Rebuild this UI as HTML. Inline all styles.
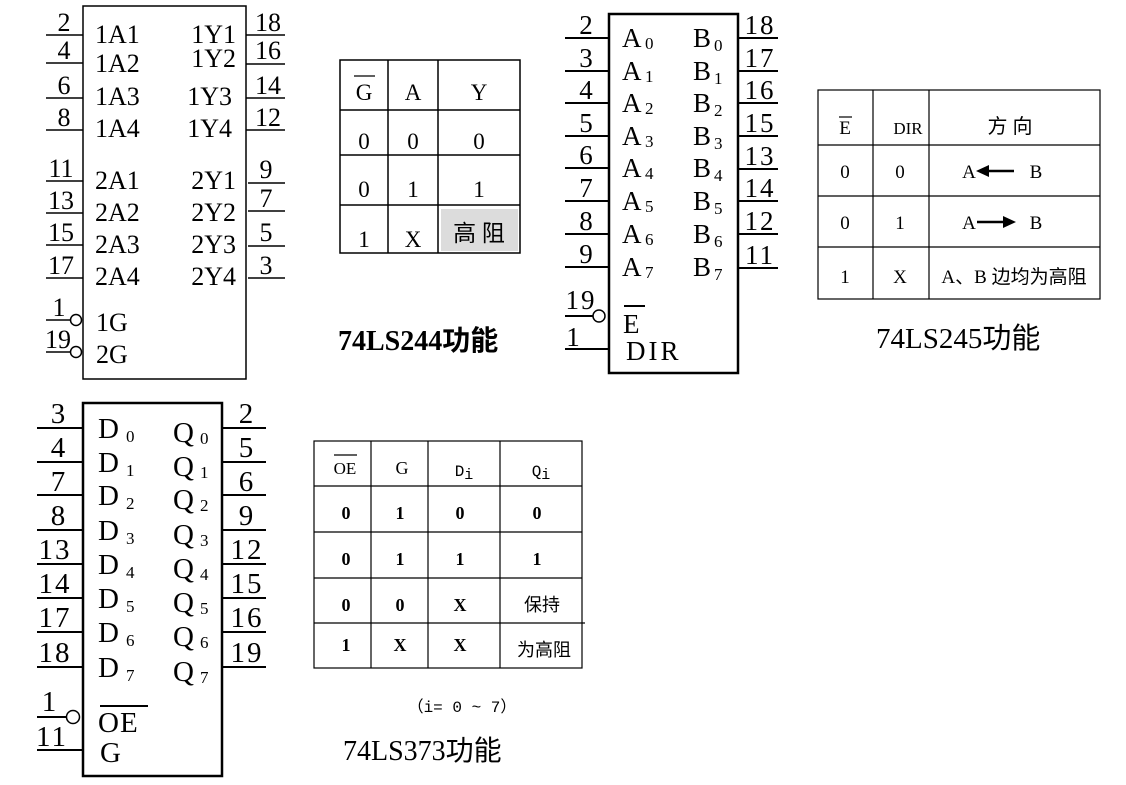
<!DOCTYPE html>
<html><head><meta charset="utf-8"><style>
html,body{margin:0;padding:0;background:#fff;}
svg{display:block;}
text{font-family:"Liberation Serif","Noto Serif CJK SC",serif;fill:#000;}
.c{font-family:"Liberation Serif","Noto Sans CJK SC",serif;}
.m{font-family:"Liberation Mono","Noto Sans CJK SC",monospace;}
</style></head><body>
<svg width="1126" height="785" viewBox="0 0 1126 785" xmlns="http://www.w3.org/2000/svg">
<g stroke="#000" stroke-width="1.5" fill="none">
<rect x="83" y="6" width="163" height="373"/>
<path d="M46 35H83M46 63H83M46 98H83M46 130H83M46 181H83M46 213H83M46 245H83M46 278H83M46 320H71M46 352H71"/>
<path d="M246 35H285M246 64H285M246 98H285M246 130H285M248 183H285M248 211H285M248 246H285M248 278H285"/>
<circle cx="76" cy="320" r="5.5"/><circle cx="76" cy="352" r="5.5"/>
<rect x="340" y="60" width="180" height="193"/>
<path d="M388 60V253M438 60V253M340 110H520M340 155H520M340 205H520"/>
</g>
<rect x="441" y="209" width="77" height="42" fill="#dcdcdc"/>
<g font-size="26">
<text x="95" y="43">1A1</text><text x="95" y="72">1A2</text><text x="95" y="105">1A3</text><text x="95" y="137">1A4</text>
<text x="95" y="189">2A1</text><text x="95" y="221">2A2</text><text x="95" y="253">2A3</text><text x="95" y="285">2A4</text>
<text x="96" y="331">1G</text><text x="96" y="363">2G</text>
<text x="236" y="43" text-anchor="end">1Y1</text><text x="236" y="67" text-anchor="end">1Y2</text><text x="232" y="105" text-anchor="end">1Y3</text><text x="232" y="137" text-anchor="end">1Y4</text>
<text x="236" y="189" text-anchor="end">2Y1</text><text x="236" y="221" text-anchor="end">2Y2</text><text x="236" y="253" text-anchor="end">2Y3</text><text x="236" y="285" text-anchor="end">2Y4</text>
<g text-anchor="middle">
<text x="64" y="31">2</text><text x="64" y="59">4</text><text x="64" y="94">6</text><text x="64" y="126">8</text>
<text x="61" y="177">11</text><text x="61" y="209">13</text><text x="61" y="241">15</text><text x="61" y="274">17</text>
<text x="59" y="316">1</text><text x="58" y="348">19</text>
<text x="268" y="31">18</text><text x="268" y="59">16</text><text x="268" y="94">14</text><text x="268" y="126">12</text>
<text x="266" y="178">9</text><text x="266" y="207">7</text><text x="266" y="241">5</text><text x="266" y="274">3</text>
</g>
</g>
<g font-size="23" text-anchor="middle">
<text x="364" y="100">G</text><line x1="354" y1="76" x2="375" y2="76" stroke="#000" stroke-width="1.2"/>
<text x="413" y="100">A</text><text x="479" y="100">Y</text>
<text x="364" y="149">0</text><text x="413" y="149">0</text><text x="479" y="149">0</text>
<text x="364" y="197">0</text><text x="413" y="197">1</text><text x="479" y="197">1</text>
<text x="364" y="247">1</text><text x="413" y="247">X</text>
<text class="c" x="479" y="241">高 阻</text>
</g>
<text x="338" y="350" font-size="28" font-weight="bold" class="c">74LS244功能</text>

<g stroke="#000" stroke-width="1.5" fill="none">
<rect x="609" y="14" width="129" height="359" stroke-width="2.5"/>
<path d="M565 38H609M565 71H609M565 103H609M565 136H609M565 168H609M565 201H609M565 234H609M565 267H609M565 316H593M565 349H609" stroke-width="2"/>
<path d="M738 38H778M738 71H778M738 103H778M738 136H778M738 169H778M738 201H778M738 234H778M738 268H778" stroke-width="2"/>
<circle cx="599" cy="316" r="6"/>
<line x1="624" y1="306" x2="645" y2="306" stroke-width="2"/>
</g>
<g font-size="27">
<text x="622" y="47">A</text><text x="622" y="80">A</text><text x="622" y="112">A</text><text x="622" y="145">A</text><text x="622" y="177">A</text><text x="622" y="210">A</text><text x="622" y="243">A</text><text x="622" y="276">A</text>
<text x="693" y="47">B</text><text x="693" y="80">B</text><text x="693" y="112">B</text><text x="693" y="145">B</text><text x="693" y="177">B</text><text x="693" y="210">B</text><text x="693" y="243">B</text><text x="693" y="276">B</text>
<text x="623" y="333">E</text><text x="626" y="360" letter-spacing="3">DIR</text>
<g text-anchor="middle" letter-spacing="2">
<text x="587" y="34">2</text><text x="587" y="67">3</text><text x="587" y="99">4</text><text x="587" y="132">5</text><text x="587" y="164">6</text><text x="587" y="197">7</text><text x="587" y="230">8</text><text x="587" y="263">9</text>
<text x="581" y="309">19</text><text x="574" y="346">1</text>
<text x="760" y="34">18</text><text x="760" y="67">17</text><text x="760" y="99">16</text><text x="760" y="132">15</text><text x="760" y="165">13</text><text x="760" y="197">14</text><text x="760" y="230">12</text><text x="760" y="264">11</text>
</g>
</g>
<g font-size="17">
<text x="645" y="49">0</text><text x="645" y="82">1</text><text x="645" y="114">2</text><text x="645" y="147">3</text><text x="645" y="179">4</text><text x="645" y="212">5</text><text x="645" y="245">6</text><text x="645" y="278">7</text>
<text x="714" y="51">0</text><text x="714" y="84">1</text><text x="714" y="116">2</text><text x="714" y="149">3</text><text x="714" y="181">4</text><text x="714" y="214">5</text><text x="714" y="247">6</text><text x="714" y="280">7</text>
</g>
<g stroke="#000" stroke-width="1.2" fill="none">
<rect x="818" y="90" width="282" height="209"/>
<path d="M873 90V299M929 90V299M818 145H1100M818 196H1100M818 247H1100"/>
<line x1="839" y1="117" x2="852" y2="117"/>
</g>
<g font-size="19" text-anchor="middle">
<text x="845" y="134">E</text>
<text x="908" y="134" font-size="17">DIR</text>
<text class="c" x="1010" y="133" font-size="20">方 向</text>
<text x="845" y="178">0</text><text x="900" y="178">0</text>
<text x="845" y="229">0</text><text x="900" y="229">1</text>
<text x="845" y="283">1</text><text x="900" y="283">X</text>
<text x="969" y="178">A</text><text x="1036" y="178">B</text>
<text x="969" y="229">A</text><text x="1036" y="229">B</text>
<text class="c" x="1014" y="283" font-size="19">A、B 边均为高阻</text>
</g>
<g stroke="#000" stroke-width="2.5"><line x1="987" y1="171" x2="1014" y2="171"/><line x1="977" y1="222" x2="1005" y2="222"/></g>
<polygon points="976,171 989,165 989,177" fill="#000"/>
<polygon points="1016,222 1003,216 1003,228" fill="#000"/>
<text x="876" y="348" font-size="29" class="c">74LS245功能</text>

<g stroke="#000" stroke-width="2" fill="none">
<rect x="83" y="403" width="139" height="373" stroke-width="2.5"/>
<path d="M37 428H83M37 462H83M37 495H83M37 530H83M37 564H83M37 598H83M37 632H83M37 667H83M37 717H67M37 750H83"/>
<path d="M222 428H266M222 462H266M222 495H266M222 530H266M222 564H266M222 598H266M222 632H266M222 667H266"/>
<circle cx="73" cy="717" r="6.5" stroke-width="1.5"/>
<line x1="100" y1="706" x2="148" y2="706"/>
</g>
<g font-size="29">
<text x="98" y="438">D</text><text x="98" y="472">D</text><text x="98" y="505">D</text><text x="98" y="540">D</text><text x="98" y="574">D</text><text x="98" y="608">D</text><text x="98" y="642">D</text><text x="98" y="677">D</text>
<text x="173" y="442">Q</text><text x="173" y="476">Q</text><text x="173" y="509">Q</text><text x="173" y="544">Q</text><text x="173" y="578">Q</text><text x="173" y="612">Q</text><text x="173" y="646">Q</text><text x="173" y="681">Q</text>
<text x="98" y="732" letter-spacing="1">OE</text><text x="100" y="762">G</text>
<g text-anchor="middle" letter-spacing="2">
<text x="59" y="423">3</text><text x="59" y="457">4</text><text x="59" y="491">7</text><text x="59" y="525">8</text><text x="55" y="559">13</text><text x="55" y="593">14</text><text x="55" y="627">17</text><text x="55" y="662">18</text>
<text x="50" y="711">1</text><text x="52" y="746">11</text>
<text x="247" y="423">2</text><text x="247" y="457">5</text><text x="247" y="491">6</text><text x="247" y="525">9</text><text x="247" y="559">12</text><text x="247" y="593">15</text><text x="247" y="627">16</text><text x="247" y="662">19</text>
</g>
</g>
<g font-size="17">
<text x="126" y="442">0</text><text x="126" y="476">1</text><text x="126" y="509">2</text><text x="126" y="544">3</text><text x="126" y="578">4</text><text x="126" y="612">5</text><text x="126" y="646">6</text><text x="126" y="681">7</text>
<text x="200" y="444">0</text><text x="200" y="478">1</text><text x="200" y="511">2</text><text x="200" y="546">3</text><text x="200" y="580">4</text><text x="200" y="614">5</text><text x="200" y="648">6</text><text x="200" y="683">7</text>
</g>
<g stroke="#000" stroke-width="1.2" fill="none">
<rect x="314" y="441" width="268" height="227"/>
<path d="M371 441V668M428 441V668M500 441V668M314 486H582M314 532H582M314 578H582M314 623H585"/>
<line x1="334" y1="455" x2="357" y2="455"/>
</g>
<g font-size="18" text-anchor="middle">
<text x="345" y="474" font-size="17">OE</text><text x="402" y="474">G</text>
<text x="464" y="476" class="m" font-size="16">D<tspan font-size="15" dy="3">i</tspan></text>
<text x="541" y="476" class="m" font-size="16">Q<tspan font-size="15" dy="3">i</tspan></text>
<g font-weight="bold"><text x="346" y="519">0</text><text x="400" y="519">1</text><text x="460" y="519">0</text><text x="537" y="519">0</text>
<text x="346" y="565">0</text><text x="400" y="565">1</text><text x="460" y="565">1</text><text x="537" y="565">1</text>
<text x="346" y="611">0</text><text x="400" y="611">0</text><text x="460" y="611">X</text>
<text x="346" y="651">1</text><text x="400" y="651">X</text><text x="460" y="651">X</text></g>
<text class="c" x="542" y="611" fill="#666" font-size="18">保持</text>
<text class="c" x="544" y="656" fill="#666" font-size="18">为高阻</text>
<text x="462" y="712" fill="#666" class="m" font-size="16">（i= 0 ~ 7）</text>
</g>
<text x="343" y="760" font-size="28" class="c">74LS373功能</text>
</svg>
</body></html>
